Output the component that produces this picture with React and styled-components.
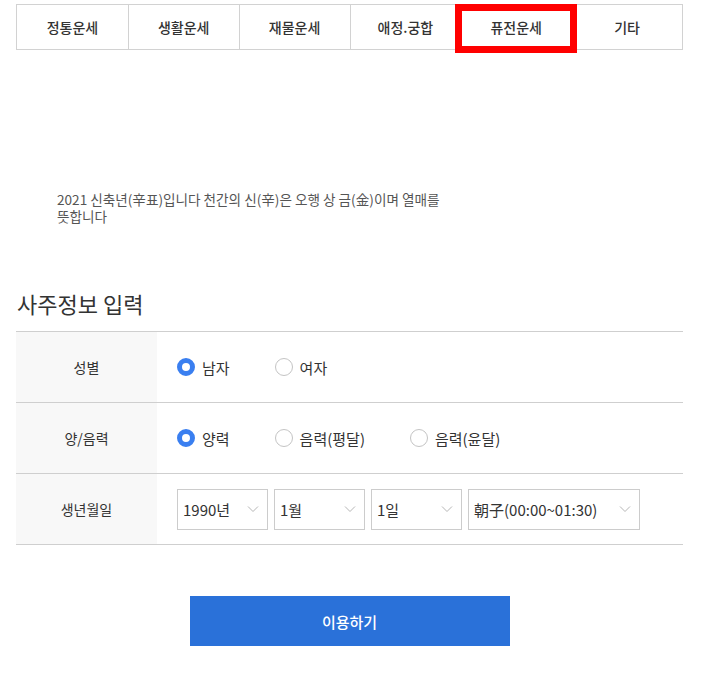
import React from 'react'
import styled, {createGlobalStyle} from 'styled-components'

const Global = createGlobalStyle`
    body {
        margin: 0;
        background: #ffffff;
        font-family: "Noto Sans CJK KR", "Noto Sans", sans-serif;
        color: #333333;
    }
`

const Page = styled.main`
    width: 667px;
    margin: 0 0 0 16px;
    padding-top: 4px;
`

const Tabs = styled.nav`
    display: grid;
    grid-template-columns: repeat(6, 1fr);
    border: 1px solid #d2d2d2;
    height: 44px;
`

const Tab = styled.div`
    position: relative;
    display: flex;
    align-items: center;
    justify-content: center;
    font-size: 14px;
    font-weight: 500;
    color: #333;
    border-left: ${p => p.$first ? 'none' : '1px solid #d2d2d2'};

    ${p => p.$marked && `
        z-index: 1;
        &::after {
            content: '';
            position: absolute;
            top: -1px;
            left: -6px;
            right: -6px;
            bottom: -4px;
            border: 7px solid #ff0000;
        }
    `}
`

const Intro = styled.p`
    margin: 141px 0 0 41px;
    width: 400px;
    font-size: 13.6px;
    line-height: 17px;
    color: #555;
    word-break: keep-all;
`

const Title = styled.h2`
    margin: 63px 0 0 1px;
    font-size: 22px;
    font-weight: 400;
    line-height: 30px;
    color: #333;
`

const Table = styled.div`
    margin-top: 13px;
    border-top: 1px solid #cfcfcf;
`

const Row = styled.div`
    display: flex;
    height: 70px;
    border-bottom: 1px solid #cfcfcf;
`

const Label = styled.div`
    width: 141px;
    flex: none;
    background: #f8f8f8;
    display: flex;
    align-items: center;
    justify-content: center;
    font-size: 14px;
    color: #333;
`

const Field = styled.div`
    display: flex;
    align-items: center;
    padding-left: 20px;
`

const Option = styled.label`
    display: flex;
    align-items: center;
    gap: 7px;
    margin-right: 45px;
    font-size: 15px;
    color: #333;
`

const Radio = styled.span`
    width: 18px;
    height: 18px;
    box-sizing: border-box;
    border-radius: 50%;
    background: #fff;
    border: ${p => p.$on ? '5px solid #3a7ff0' : '1.5px solid #c4c4c4'};
`

const Selects = styled.div`
    display: flex;
    gap: 6px;
`

const Select = styled.div`
    width: ${p => p.$w}px;
    height: 41px;
    box-sizing: border-box;
    border: 1px solid #cccccc;
    display: flex;
    align-items: center;
    justify-content: space-between;
    padding: 0 8px 0 5px;
    font-size: 15px;
    color: #333;
    background: #fff;

    svg {
        flex: none;
    }
`

const Submit = styled.button`
    display: block;
    width: 320px;
    height: 50px;
    margin: 51px auto 0;
    border: none;
    background: #2a71d9;
    color: #ffffff;
    font-family: inherit;
    font-size: 15px;
    font-weight: 500;
`

const Chevron = () => (
    <svg width="12" height="8" viewBox="0 0 12 8">
        <path d="M1 1.5 L6 6.5 L11 1.5" fill="none" stroke="#b5b5b5" strokeWidth="1"/>
    </svg>
)

const tabs = ['정통운세', '생활운세', '재물운세', '애정.궁합', '퓨전운세', '기타']

export default function App() {
    return (
        <Page>
            <Global/>
            <Tabs>
                {tabs.map((t, i) => (
                    <Tab key={t} $first={i === 0} $marked={i === 4}>{t}</Tab>
                ))}
            </Tabs>

            <Intro>2021 신축년(辛표)입니다 천간의 신(辛)은 오행 상 금(金)이며 열매를 뜻합니다</Intro>

            <Title>사주정보 입력</Title>

            <Table>
                <Row>
                    <Label>성별</Label>
                    <Field>
                        <Option><Radio $on/>남자</Option>
                        <Option><Radio/>여자</Option>
                    </Field>
                </Row>
                <Row>
                    <Label>양/음력</Label>
                    <Field>
                        <Option><Radio $on/>양력</Option>
                        <Option><Radio/>음력(평달)</Option>
                        <Option><Radio/>음력(윤달)</Option>
                    </Field>
                </Row>
                <Row>
                    <Label>생년월일</Label>
                    <Field>
                        <Selects>
                            <Select $w={91}>1990년<Chevron/></Select>
                            <Select $w={91}>1월<Chevron/></Select>
                            <Select $w={91}>1일<Chevron/></Select>
                            <Select $w={172}>朝子(00:00~01:30)<Chevron/></Select>
                        </Selects>
                    </Field>
                </Row>
            </Table>

            <Submit>이용하기</Submit>
        </Page>
    )
}
